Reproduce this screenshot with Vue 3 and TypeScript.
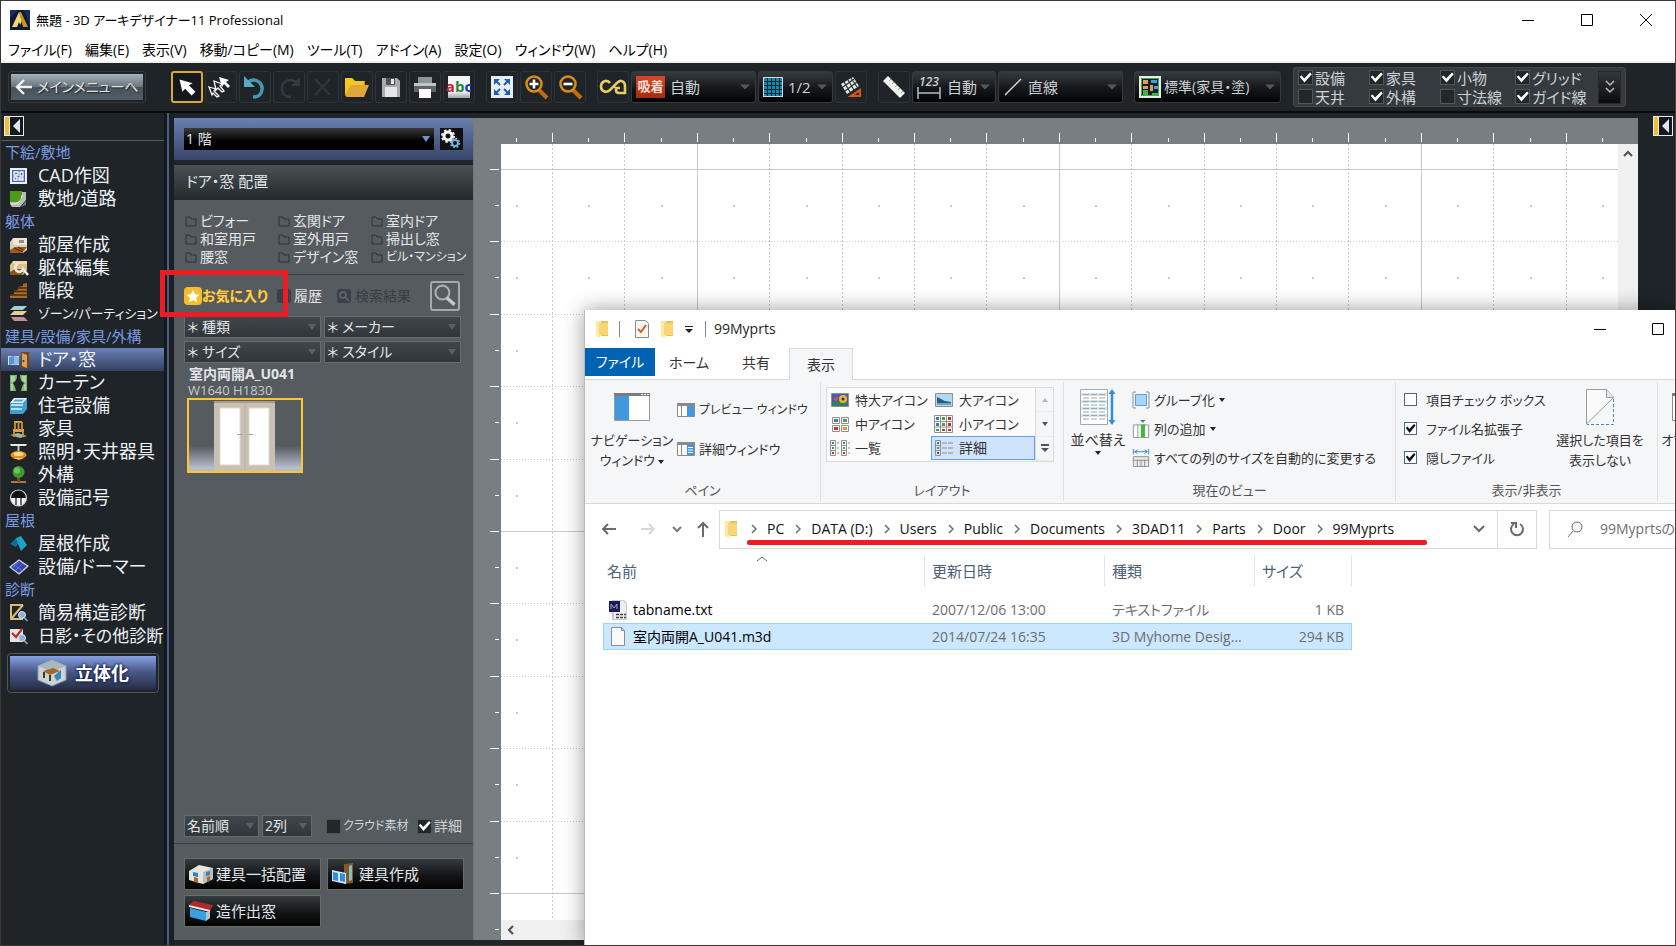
<script setup lang="ts">
import { ref } from 'vue'

interface SideEntry { label: string; icon?: string; active?: boolean; long?: boolean }
interface Tool { id: string; label: string; active?: boolean }
interface Layer { label: string; on: boolean }

const icons: Record<string, string> = {
  cad: '<rect x="1" y="1" width="17" height="16" fill="#e8eef8"/><rect x="3" y="3" width="13" height="12" fill="#4a66b0"/><path d="M5 5h4v3H5zM5 10h3v3H5zM11 5h3v4h-3zM10 11h4v2h-4z" fill="none" stroke="#fff" stroke-width="1.3"/>',
  site: '<path d="M1 2h16v8l-6 7H3l-2-3z" fill="#b9bdb8"/><path d="M1 1h12v7q-1 4-5 4H1z" fill="#4c9a18"/><path d="M2 14q10 1 11-9" stroke="#eee" fill="none"/><path d="M12 17l5-6v4z" fill="#777"/>',
  room: '<path d="M4 2h14v12l-4 3H1V6z" fill="#d9cdb4"/><path d="M4 2h14v7H4z" fill="#eee6d4"/><path d="M10 4h5v3h-5z" fill="#8b9296"/><path d="M1 14l5-3h12l-5 6H1z" fill="#9a5c1c"/><path d="M5 12l9 4M9 11l5 3" stroke="#4c2a08"/>',
  edit: '<path d="M4 2h14v9l-4 5H1V6z" fill="#dcc182"/><path d="M4 2h14v3H4z" fill="#eedcae"/><path d="M1 13l5-3h10l-3 6H1z" fill="#8a5218"/><path d="M9 5a4 4 0 1 0 5 5l5 6" fill="none" stroke="#e8eaec" stroke-width="2.6"/>',
  stairs: '<path d="M18 1v15H1v-3l4-1V9l4-1V5l5-1V2z" fill="#a96a2c"/><path d="M1 13h17M5 9.500h13M9 6h9" stroke="#4d2a0a" stroke-width="1.300"/>',
  zone: '<path d="M5 1h13l-4 4H1z" fill="#9fcfd0"/><path d="M5 6h13l-4 4H1z" fill="#e6cf93"/><path d="M2 12h13l4 4H5z" fill="#c58b9b"/>',
  door: '<path d="M-1 5h11v9H-1z" fill="#cfe4f6"/><path d="M0 6l5-1v8l-5 1z" fill="#5a94cf"/><path d="M5 5l5 1v7l-5 1z" fill="#8cbbe8"/><path d="M12 1h8v16h-8z" fill="#7a4616"/><path d="M13 2l5 2v13l-5-2z" fill="#d7a35c"/><circle cx="14.500" cy="10" r="1" fill="#4a2a0a"/>',
  curtain: '<path d="M1 1h7q0 6-4 8 2 3 3 8H1z" fill="#7fb878"/><path d="M18 1h-7q0 6 4 8-2 3-3 8h6z" fill="#7fb878"/><path d="M3 2v6M5 2v5M14 2v5M16 2v6M3 10v6M16 10v6" stroke="#d6efcf"/>',
  bath: '<path d="M5 1h13v11l-4 5H1V6z" fill="#3fa0cf"/><path d="M5 1h13l-4 5H1z" fill="#e9f3f8"/><path d="M6 2.500h9l-2 2H4z" fill="#4aa6d6"/><path d="M2 8h12M2 12h11" stroke="#dff3fb" stroke-width="1.500"/>',
  chair: '<path d="M1 15l8-2 9 3-7 2z" fill="#9dbb92"/><path d="M5 1h8v2H5zM4 9h11v3H4z" fill="#d6a050"/><path d="M6 2v8M9.500 2v8M13 2v8M5 11v6M14 11v6" stroke="#c98f3c" stroke-width="1.800"/>',
  lamp: '<path d="M1 1h17l-1 2H2z" fill="#e8e8e8"/><path d="M9.500 3v5" stroke="#c8c8c8" stroke-width="2"/><ellipse cx="9.500" cy="12" rx="8" ry="4" fill="#f08a1c"/><ellipse cx="9.500" cy="11" rx="5" ry="2" fill="#ffe28a"/><path d="M4 15h11l-5 2z" fill="#ffc25a"/>',
  tree: '<path d="M2 15h15v2H2z" fill="#a37a4a"/><path d="M8 10h3v6H8z" fill="#7a4a1c"/><circle cx="9.500" cy="6" r="6" fill="#3f9a34"/><circle cx="8" cy="4.500" r="3" fill="#72c45c"/>',
  symbol: '<circle cx="9.500" cy="9" r="8" fill="#f2f2f2" stroke="#c8ccce" stroke-width="1.200"/><path d="M2 9a7.500 7.500 0 0 1 15 0z" fill="#111"/><path d="M7 8v8M12 8v8" stroke="#111" stroke-width="1.200"/>',
  roof: '<path d="M1 9l6-6 5 1-5 8z" fill="#0c6f8c"/><path d="M7 3l5-2 6 9-6 6-3-7z" fill="#1fa0c4"/>',
  solar: '<path d="M1 9l9-7 9 6-9 8z" fill="#3a46a8" stroke="#cfd4e8" stroke-width="1.300"/><path d="M5 7l9 6M10 4L3 11M14 5l-8 8" stroke="#6c7be0" stroke-width=".8"/>',
  brace: '<path d="M1 1h13M2 1v14h12M14 1L2 15" fill="none" stroke="#dcb87c" stroke-width="2"/><circle cx="13" cy="11" r="3.500" fill="#8fb2dc" stroke="#d4e2f2"/><path d="M15.500 14l3 3" stroke="#9ea8b4" stroke-width="1.600"/>',
  shade: '<path d="M1 2h13v13H1z" fill="#e8e2e0"/><path d="M3 6l4 4 6-8" fill="none" stroke="#b03030" stroke-width="2.200"/><circle cx="13" cy="11" r="3.500" fill="#8fb2dc" stroke="#d4e2f2"/><path d="M15.500 14l3 3" stroke="#9ea8b4" stroke-width="1.600"/>',
  select: '<path d="M7 7l3 13 3-3 7 7 4-4-7-7 4-2z" fill="#fff"/>',
  multi: '<path d="M13 5l10 3-3 2 4 4-2 2-4-4-2 3z" fill="#fff"/><path d="M8 9l8 3-2 2 4 5-2 1-4-4-2 2zM3 15l7 2-2 2 5 5-2 1-4-4-1 2z" fill="#1c2023" stroke="#fff" stroke-width="1.300"/>',
  undo: '<path d="M8 10q6-4 11 0t2 11q-2 4-8 4" fill="none" stroke="#4a97b2" stroke-width="3.400"/><path d="M4 4v11h11z" fill="#5aa9c4"/>',
  redo: '<path d="M22 10q-6-4-11 0t-2 11q2 4 8 4" fill="none" stroke="#343a3d" stroke-width="2.600"/><path d="M26 5v9h-9z" fill="#343a3d"/>',
  remove: '<path d="M7 7l15 16M22 7L7 23" stroke="#31373b" stroke-width="2.200"/>',
  open: '<path d="M3 6h7l3 3h10v4L9 24H3z" fill="#c48a1a"/><path d="M3 7l6 17h-5z" fill="#e3a910"/><path d="M3 6h7l3 3h9v4L9 13 3 23z" fill="#f4c81c"/><path d="M9 13h18l-5 12H4z" fill="#e0a73c"/>',
  save: '<path d="M6 6h15l3 3v16H6z" fill="#a6abae"/><path d="M10 6h9v7h-9z" fill="#4c5256"/><path d="M15 7h3v5h-3z" fill="#e6e8ea"/><path d="M9 15h12v10H9z" fill="#e4e6e8"/>',
  print: '<path d="M8 5h14v6H8z" fill="#8e9498"/><path d="M4 11h22v9H4z" fill="#5d6468"/><path d="M4 11h22v3H4z" fill="#c0c4c7"/><path d="M9 17h12v9H9z" fill="#fff"/>',
  fit: '<path d="M4 4h22v22H4z" fill="#e8edf2"/><path d="M7 13V7h6zM17 7h6v6zM7 17v6h6zM23 17v6h-6z" fill="#1f5fae"/><path d="M9 9l4 4M21 9l-4 4M9 21l4-4M21 21l-4-4" stroke="#1f5fae" stroke-width="2"/>',
  plus: '<path d="M18 18l8 8" stroke="#c06a10" stroke-width="4"/><circle cx="13" cy="12" r="7.500" fill="#20262a" stroke="#d88a1e" stroke-width="2.600"/><path d="M8.500 12h9M13 7.500v9" stroke="#fff" stroke-width="2.600"/>',
  minus: '<path d="M18 18l8 8" stroke="#c06a10" stroke-width="4"/><circle cx="13" cy="12" r="7.500" fill="#20262a" stroke="#d88a1e" stroke-width="2.600"/><path d="M8.500 12h9" stroke="#fff" stroke-width="2.600"/>',
  link: '<path d="M12 11C9 7 3 9 3 14.500S9 21 12 18l7-7c3-4 8-2 8 3v7h-6q-3 0-3-3v-2h4" fill="none" stroke="#e6cc62" stroke-width="2.600"/>',
  tilt: '<path d="M5 12l12-7 6 9-12 8z" fill="#e6e8ea"/><path d="M8 10l6 10M12 8l6 10M15 6l6 9M7 15l11-8M9 19l12-9" stroke="#2a3034" stroke-width="1.200"/><path d="M15 24h9v-6z" fill="none" stroke="#d4581c" stroke-width="2.200"/>',
  ruler: '<path d="M4 9l5-5 17 17-5 5z" fill="#f1f1ee"/><path d="M12 7l-2 2M15 10l-2 2M18 13l-2 2M21 16l-2 2M24 19l-2 2" stroke="#9a9a98"/>',
}

const sideEntries: SideEntry[] = [
  { label: '下絵/敷地' },
  { label: 'CAD作図', icon: 'cad' },
  { label: '敷地/道路', icon: 'site' },
  { label: '躯体' },
  { label: '部屋作成', icon: 'room' },
  { label: '躯体編集', icon: 'edit' },
  { label: '階段', icon: 'stairs' },
  { label: 'ゾーン/パーティション', icon: 'zone', long: true },
  { label: '建具/設備/家具/外構' },
  { label: 'ドア・窓', icon: 'door', active: true },
  { label: 'カーテン', icon: 'curtain' },
  { label: '住宅設備', icon: 'bath' },
  { label: '家具', icon: 'chair' },
  { label: '照明・天井器具', icon: 'lamp' },
  { label: '外構', icon: 'tree' },
  { label: '設備記号', icon: 'symbol' },
  { label: '屋根' },
  { label: '屋根作成', icon: 'roof' },
  { label: '設備/ドーマー', icon: 'solar' },
  { label: '診断' },
  { label: '簡易構造診断', icon: 'brace' },
  { label: '日影・その他診断', icon: 'shade' },
]

const menus = ['ファイル(F)', '編集(E)', '表示(V)', '移動/コピー(M)', 'ツール(T)', 'アドイン(A)', '設定(O)', 'ウィンドウ(W)', 'ヘルプ(H)']

const editTools: Tool[] = [
  { id: 'select', label: '選択', active: true },
  { id: 'multi', label: '複数選択' },
  { id: 'undo', label: '元に戻す' },
  { id: 'redo', label: 'やり直し' },
  { id: 'remove', label: '削除' },
  { id: 'open', label: '開く' },
  { id: 'save', label: '保存' },
  { id: 'print', label: '印刷' },
]
const viewTools: Tool[] = [
  { id: 'fit', label: '全体表示' },
  { id: 'plus', label: '拡大' },
  { id: 'minus', label: '縮小' },
]

const layers = ref<Layer[]>([
  { label: '設備', on: true },
  { label: '家具', on: true },
  { label: '小物', on: true },
  { label: 'グリッド', on: true },
  { label: '天井', on: false },
  { label: '外構', on: true },
  { label: '寸法線', on: false },
  { label: 'ガイド線', on: true },
])

const categories = ['ビフォー', '玄関ドア', '室内ドア', '和室用戸', '室外用戸', '掃出し窓', '腰窓', 'デザイン窓', 'ビル・マンション']
const filters = ['種類', 'メーカー', 'サイズ', 'スタイル']
const cloud = ref(false)
const detail = ref(true)

const GRID = 72.4
const cols = Array.from({ length: 30 }, (_, i) => ({ pos: Math.round(51 + GRID * i), solid: i % 5 === 2 }))
const rows = Array.from({ length: 20 }, (_, i) => ({ pos: Math.round(25 + GRID * i), solid: i % 5 === 0 }))
const half = Math.round(GRID / 2)

const crumbs = ['PC', 'DATA (D:)', 'Users', 'Public', 'Documents', '3DAD11', 'Parts', 'Door', '99Myprts']
const ribbonChecks = ref([
  { label: '項目チェック ボックス', on: false },
  { label: 'ファイル名拡張子', on: true },
  { label: '隠しファイル', on: true },
])
const files = [
  { name: 'tabname.txt', date: '2007/12/06 13:00', type: 'テキストファイル', size: '1 KB', selected: false },
  { name: '室内両開A_U041.m3d', date: '2014/07/24 16:35', type: '3D Myhome Desig...', size: '294 KB', selected: true },
]
</script>

<template>
  <div class="app">
    <header class="titlebar">
      <svg class="logo" viewBox="0 0 20 20"><rect width="20" height="20" fill="#14305a" /><path d="M0 20V8l8-8h6l6 16v4z" fill="#0c1a34" /><path d="M2 17L9 2l3 9-3 6z" fill="#f3d57a" /><path d="M9 2h2l7 15h-5z" fill="#c79426" /><path d="M9 12l2 5H7z" fill="#0c1a34" /></svg>
      <h1>無題 - 3D アーキデザイナー11 Professional</h1>
      <div class="winbtns">
        <button aria-label="最小化"><svg viewBox="0 0 12 12"><path d="M0 6.500h12" stroke="#000" /></svg></button>
        <button aria-label="最大化"><svg viewBox="0 0 12 12"><path d="M.5.500h11v11H.5z" fill="none" stroke="#000" /></svg></button>
        <button aria-label="閉じる"><svg viewBox="0 0 12 12"><path d="M0 0l12 12M12 0L0 12" stroke="#000" /></svg></button>
      </div>
    </header>
    <nav class="menubar">
      <button v-for="m in menus" :key="m">{{ m }}</button>
    </nav>

    <div class="toolbar">
      <button class="mainmenu"><span><svg viewBox="0 0 18 18"><path d="M17 9H2M9 2L2 9l7 7" fill="none" stroke="#eef1f3" stroke-width="2.400" /></svg>メインメニューへ</span></button>
      <div class="tools">
        <button v-for="t in editTools" :key="t.id" class="tool" :class="{ on: t.active }" :aria-label="t.label">
          <svg viewBox="0 0 30 30" v-html="icons[t.id]" />
        </button>
        <button class="tool abc" aria-label="文字"><span class="abc-box"><b class="r">a</b><b class="g">b</b><b class="b">c</b></span></button>
      </div>
      <div class="tools">
        <button v-for="t in viewTools" :key="t.id" class="tool" :aria-label="t.label">
          <svg viewBox="0 0 30 30" v-html="icons[t.id]" />
        </button>
      </div>
      <div class="tools">
        <button class="tool" aria-label="連続"><svg viewBox="0 0 30 30" v-html="icons.link" /></button>
        <div class="combo wide">
          <span class="snap">吸着</span>
          <select aria-label="吸着"><option>自動</option></select>
          <svg class="caret" viewBox="0 0 12 6"><path d="M0 0h12L6 6z" /></svg>
        </div>
        <div class="combo narrow">
          <svg class="cicon" viewBox="0 0 20 20"><path d="M0 0h20v20H0z" fill="#d5dadc" /><path d="M1 1h18v18H1z" fill="#1488ae" /><path d="M4.500 1v18M8.500 1v18M12.500 1v18M16.500 1v18M1 4.500h18M1 8.500h18M1 12.500h18M1 16.500h18" stroke="#06242e" /></svg>
          <select aria-label="グリッド間隔"><option>1/2</option></select>
          <svg class="caret" viewBox="0 0 12 6"><path d="M0 0h12L6 6z" /></svg>
        </div>
        <button class="tool" aria-label="グリッド傾き"><svg viewBox="0 0 30 30" v-html="icons.tilt" /></button>
      </div>
      <div class="tools">
        <button class="tool" aria-label="計測"><svg viewBox="0 0 30 30" v-html="icons.ruler" /></button>
        <div class="combo dim">
          <span class="dims"><i>123</i><svg viewBox="0 0 24 12"><path d="M1 0v12M23 0v12M1 6h22" stroke="#b8bcc0" stroke-width="1.500" /></svg></span>
          <select aria-label="寸法"><option>自動</option></select>
          <svg class="caret" viewBox="0 0 12 6"><path d="M0 0h12L6 6z" /></svg>
        </div>
        <div class="combo wide">
          <svg class="cicon" viewBox="0 0 20 20"><path d="M2 18L18 2" stroke="#d5dadc" stroke-width="1.500" /></svg>
          <select aria-label="線種"><option>直線</option></select>
          <svg class="caret" viewBox="0 0 12 6"><path d="M0 0h12L6 6z" /></svg>
        </div>
      </div>
      <div class="tools">
        <div class="combo std">
          <svg class="cicon big" viewBox="0 0 22 22"><path d="M1 1h20v20H1z" fill="#123" stroke="#e6efe6" stroke-width="2" /><path d="M2.500 2.500h17v17h-17z" fill="none" stroke="#43b047" /><path d="M4 4h5v4H4zM4 10h5v3H4zM11 9h3v6h-3z" fill="#e79a52" /><path d="M12 4h6v3h-6zM15 10h4v3h-4z" fill="#4a9ee0" /><path d="M4 14h5v5H4zM13 17h6v2h-6z" fill="#43b047" /></svg>
          <select aria-label="表示設定"><option>標準(家具・塗)</option></select>
          <svg class="caret" viewBox="0 0 12 6"><path d="M0 0h12L6 6z" /></svg>
        </div>
      </div>
      <div class="layers">
        <div class="layer-grid">
          <label v-for="l in layers" :key="l.label" class="dcheck"><input v-model="l.on" type="checkbox">{{ l.label }}</label>
        </div>
        <button class="more" aria-label="その他"><svg viewBox="0 0 12 16"><path d="M2 2l4 4 4-4M2 9l4 4 4-4" fill="none" stroke="#b4babd" stroke-width="1.500" /></svg></button>
      </div>
    </div>

    <div class="body">
      <aside class="side">
        <div class="side-top"><button class="collapse" aria-label="折りたたむ"><svg viewBox="0 0 20 20"><path d="M0 0h20v20H0z" fill="#e6ebf5" /><path d="M1 1h4v18H1z" fill="#f0bf35" /><path d="M6 1h13v18H6z" fill="#15191c" /><path d="M16 3v14L9 10z" fill="#dfe4f6" /></svg></button></div>
        <ul>
          <li v-for="s in sideEntries" :key="s.label" :class="{ head: !s.icon, active: s.active, long: s.long }">
            <template v-if="!s.icon">{{ s.label }}</template>
            <button v-else><svg viewBox="0 0 19 18" v-html="icons[s.icon]" />{{ s.label }}</button>
          </li>
        </ul>
        <button class="solid"><span><svg viewBox="0 0 30 28"><path d="M15 1l14 6v14l-14 6L1 21V7z" fill="#c9d4d8" stroke="#8d9aa0" /><path d="M15 1l14 6-14 6L1 7z" fill="#aab8be" /><path d="M6 12l10-3 7 3-10 4z" fill="#a2672c" /><path d="M7 13v6M13 16v6" stroke="#5a3410" stroke-width="2" /><path d="M17 17l7-6v8l-4 3z" fill="#3a86b8" /></svg>立体化</span></button>
      </aside>
      <div class="divider"></div>

      <section class="panel">
        <div class="floor">
          <div class="floorsel">
            <select aria-label="階"><option>1 階</option></select>
            <svg viewBox="0 0 8 6"><path d="M0 0h8L4 6z" fill="#6f93cf" /></svg>
          </div>
          <button class="gear" aria-label="階設定"><svg viewBox="0 0 22 22"><circle cx="8" cy="8" r="4" fill="none" stroke="#f2f2f2" stroke-width="3" /><circle cx="8" cy="8" r="6" fill="none" stroke="#f2f2f2" stroke-width="2" stroke-dasharray="2.500 2.200" /><circle cx="15" cy="15" r="3" fill="none" stroke="#7aaedd" stroke-width="2" /><circle cx="15" cy="15" r="4.500" fill="none" stroke="#7aaedd" stroke-width="1.500" stroke-dasharray="1.800 1.700" /></svg></button>
        </div>
        <h2>ドア・窓 配置</h2>
        <div class="panel-main">
          <div class="cats">
            <button v-for="c in categories" :key="c" :class="{ small: c.length > 6 }"><svg viewBox="0 0 12 11"><path d="M1 10V1h4l1 2h5v7z" fill="none" stroke="#2c3236" /></svg>{{ c }}</button>
          </div>
          <div class="favrow">
            <button class="fav"><svg viewBox="0 0 18 18"><rect width="18" height="18" rx="4" fill="#f3bd2c" /><path d="M9 3l2 4.200 4.500.5-3.400 3 1 4.500L9 13l-4.100 2.200 1-4.500-3.400-3L7 7.200z" fill="#fff" /></svg>お気に入り</button>
            <button class="hist"><svg viewBox="0 0 14 14"><rect width="14" height="14" rx="3" fill="#394047" /><path d="M7 3v4h4" stroke="#596067" stroke-width="2" fill="none" /></svg>履歴</button>
            <button class="results" disabled><svg viewBox="0 0 14 14"><rect width="14" height="14" rx="3" fill="#394047" /><circle cx="6" cy="6" r="3" fill="none" stroke="#656c71" stroke-width="1.500" /><path d="M8 8l4 4" stroke="#656c71" stroke-width="1.500" /></svg>検索結果</button>
            <button class="search" aria-label="検索"><svg viewBox="0 0 30 30"><circle cx="12" cy="11" r="8" fill="none" stroke="#a9b0b5" stroke-width="2.400" /><path d="M17 17l9 8" stroke="#c3c8cb" stroke-width="4" /></svg></button>
            <div class="redbox"></div>
          </div>
          <div class="filters">
            <div v-for="f in filters" :key="f" class="psel">
              <select :aria-label="f"><option>＊ {{ f }}</option></select>
              <svg viewBox="0 0 8 6"><path d="M0 0h8L4 6z" fill="#596065" /></svg>
            </div>
          </div>
          <button class="part">
            <b>室内両開A_U041</b>
            <span>W1640 H1830</span>
            <svg viewBox="0 0 112 70" preserveAspectRatio="none">
              <defs><linearGradient id="floorfade" x1="0" y1="0" x2="0" y2="1"><stop offset=".65" stop-color="#555b5f" /><stop offset=".95" stop-color="#b4bbc9" /></linearGradient></defs>
              <rect width="112" height="70" fill="url(#floorfade)" />
              <path d="M25 1h61v69H25z" fill="#c9bfb2" /><path d="M25 1h61v2H25z" fill="#a59d92" /><path d="M56 3v67" stroke="#bbb1a4" />
              <path d="M31 8h20v56H31zM60 8h20v56H60z" fill="#fff" stroke="#dfd8cf" />
              <path d="M48 34h6M58 34h6" stroke="#a3a7a3" />
            </svg>
          </button>
          <div class="bottomrow">
            <div class="psel s1"><select aria-label="並び順"><option>名前順</option></select><svg viewBox="0 0 8 6"><path d="M0 0h8L4 6z" fill="#596065" /></svg></div>
            <div class="psel s2"><select aria-label="列数"><option>2列</option></select><svg viewBox="0 0 8 6"><path d="M0 0h8L4 6z" fill="#596065" /></svg></div>
            <label class="dcheck cloud"><input v-model="cloud" type="checkbox">クラウド素材</label>
            <label class="dcheck"><input v-model="detail" type="checkbox">詳細</label>
          </div>
        </div>
        <div class="actions">
          <button><svg viewBox="0 0 26 22"><path d="M1 8l10-6 14 3v11l-10 5L1 17z" fill="#e4e4e0" /><path d="M15 9l10-4v11l-10 5z" fill="#bdbdb8" /><path d="M5 9l5 1v4l-5-1zM18 9l4-1v4l-4 1z" fill="#2e83c4" /><path d="M6 14l4 1v5l-4-1zM19 14l3-1v5l-3 1z" fill="#a56a30" /></svg>建具一括配置</button>
          <button><svg viewBox="0 0 26 22"><path d="M13 1l9-1v20l-9 1z" fill="#8a5526" /><path d="M18 3l3-1v15l-3 1z" fill="#7cc4c4" /><path d="M1 7l14 3v11L1 18z" fill="#d7e8f4" /><path d="M2 9l5 1v8l-5-1zM9 10l5 1v8l-5-1z" fill="#2e8fe0" /></svg>建具作成</button>
          <button><svg viewBox="0 0 26 22"><path d="M1 5l5-4 19 4-3 6z" fill="#b0282c" /><path d="M1 5l21 5v2L1 7z" fill="#e8e8e8" /><path d="M2 8l16 4v9L2 17z" fill="#3aa0e0" /><path d="M18 12l4-1v7l-4 3z" fill="#b4c4cc" /></svg>造作出窓</button>
        </div>
      </section>

      <main class="canvas">
        <svg class="ruler-top">
          <g v-for="c in cols" :key="c.pos">
            <rect :x="c.pos + 27" y="15" width="1" height="9" fill="#fff" />
            <rect :x="c.pos + 27 - half" y="20" width="1" height="4" fill="#fff" />
          </g>
        </svg>
        <svg class="ruler-left">
          <g v-for="r in rows" :key="r.pos">
            <rect x="16" :y="r.pos" width="9" height="1" fill="#fff" />
            <rect x="21" :y="r.pos + half" width="4" height="1" fill="#fff" />
          </g>
        </svg>
        <svg class="sheet">
          <g fill="none" stroke="#c8c8c8" stroke-width="1">
            <line v-for="c in cols" :key="'c' + c.pos" :x1="c.pos + 0.5" y1="0" :x2="c.pos + 0.5" y2="2000" :stroke-dasharray="c.solid ? 'none' : '2 2'" />
            <line v-for="r in rows" :key="'r' + r.pos" x1="0" :y1="r.pos + 0.5" x2="3000" :y2="r.pos + 0.5" :stroke-dasharray="r.solid ? 'none' : '1 2'" />
          </g>
          <template v-for="r in rows" :key="'d' + r.pos">
            <rect v-for="c in cols" :key="c.pos" :x="c.pos - half" :y="r.pos + half" width="2" height="2" fill="#c8c8c8" />
          </template>
        </svg>
        <div class="vscroll"><button aria-label="上へ"><svg viewBox="0 0 10 8"><path d="M1 6l4-4 4 4" fill="none" stroke="#505050" stroke-width="2" /></svg></button></div>
        <div class="hscroll"><button aria-label="左へ"><svg viewBox="0 0 8 10"><path d="M6 1L2 5l4 4" fill="none" stroke="#505050" stroke-width="2" /></svg></button></div>
      </main>
      <div class="rightstrip"><button class="collapse" aria-label="展開"><svg viewBox="0 0 20 20"><path d="M0 0h20v20H0z" fill="#e6ebf5" /><path d="M1 1h4v18H1z" fill="#f0bf35" /><path d="M6 1h13v18H6z" fill="#15191c" /><path d="M16 3v14L9 10z" fill="#dfe4f6" /></svg></button></div>
    </div>

    <section class="explorer">
      <header class="ex-title">
        <svg class="folder" viewBox="0 0 14 18"><path d="M4 1h9v15H4z" fill="#e8bf58" /><path d="M1 1h5l1 14-3 3-3-2z" fill="#ffe9a2" /><path d="M4 3h9v12H4z" fill="#f6d679" /></svg>
        <i class="sep"></i>
        <svg class="doc" viewBox="0 0 14 18"><path d="M.5.500h10l3 3v14H.5z" fill="#f8f8f8" stroke="#8c8c8c" /><path d="M3 9l3 3 5-7" fill="none" stroke="#e8581c" stroke-width="2" /></svg>
        <svg class="folder" viewBox="0 0 14 18"><path d="M4 1h9v15H4z" fill="#e8bf58" /><path d="M1 1h5l1 14-3 3-3-2z" fill="#ffe9a2" /><path d="M4 3h9v12H4z" fill="#f6d679" /></svg>
        <button class="qat" aria-label="カスタマイズ"><svg viewBox="0 0 8 7"><path d="M0 0h8v1H0zM0 3h8L4 7z" fill="#222" /></svg></button>
        <i class="sep"></i>
        <h2>99Myprts</h2>
        <div class="ex-btns">
          <button aria-label="最小化"><svg viewBox="0 0 12 12"><path d="M0 6.500h12" stroke="#000" /></svg></button>
          <button aria-label="最大化"><svg viewBox="0 0 12 12"><path d="M.5.500h11v11H.5z" fill="none" stroke="#000" /></svg></button>
        </div>
      </header>
      <nav class="tabs">
        <button class="file">ファイル</button>
        <button class="t-home">ホーム</button>
        <button class="t-share">共有</button>
        <button class="current">表示</button>
      </nav>
      <div class="ribbon">
        <div class="group g-pane">
          <div class="gbody">
            <button class="bigbtn nav"><svg viewBox="0 0 36 28"><path d="M.5.500h35v27H.5z" fill="#fff" stroke="#9a9a9a" /><path d="M0 0h36v3H0z" fill="#7b7b7b" /><path d="M1 3h14v24H1z" fill="#3f98e0" /><path d="M27 1h2v1h-2zM30 1h2v1h-2zM33 1h2v1h-2z" fill="#fff" /></svg><span>ナビゲーション<br>ウィンドウ <svg class="dd" viewBox="0 0 6 4"><path d="M0 0h6L3 4z" /></svg></span></button>
            <div class="stack two">
              <button class="sm tight"><svg viewBox="0 0 18 14"><path d="M.5.500h17v13H.5z" fill="#fff" stroke="#8a8a8a" /><path d="M0 0h18v3H0z" fill="#8a8a8a" /><path d="M4.500 3v11" stroke="#8a8a8a" /><path d="M10 3h7v10h-7z" fill="#3f98e0" /></svg>プレビュー ウィンドウ</button>
              <button class="sm"><svg viewBox="0 0 18 14"><path d="M.5.500h17v13H.5z" fill="#fff" stroke="#8a8a8a" /><path d="M0 0h18v3H0z" fill="#8a8a8a" /><path d="M4.500 3v11" stroke="#8a8a8a" /><path d="M10 3h7v10h-7z" fill="#3f98e0" /><path d="M11 5.500h5M11 8h5M11 10.500h5" stroke="#fff" /></svg>詳細ウィンドウ</button>
            </div>
          </div>
          <p>ペイン</p>
        </div>
        <div class="group g-layout">
          <div class="gbody">
            <div class="gallery">
              <div class="views">
                <button><svg viewBox="0 0 20 18"><path d="M1.500 2.500h17v13h-17z" fill="#3c62b4" stroke="#909090" /><path d="M3 11h14v3H3z" fill="#2c8a3c" /><circle cx="6" cy="8" r="2" fill="#e8483c" /><circle cx="13" cy="8" r="4" fill="#f0b82a" /><circle cx="13" cy="8" r="1.500" fill="#402808" /></svg>特大アイコン</button>
                <button><svg viewBox="0 0 20 18"><path d="M1.500 2.500h17v13h-17z" fill="#b4d8f4" stroke="#909090" /><path d="M3 6l8 4 6 1v3H3z" fill="#28607c" /><path d="M3 12h14v2H3z" fill="#6ea4c0" /></svg>大アイコン</button>
                <button><svg viewBox="0 0 20 18"><path d="M2.500 2.500h7v6h-7zM11.500 2.500h7v6h-7zM2.500 10.500h7v6h-7zM11.500 10.500h7v6h-7z" fill="#fff" stroke="#909090" /><path d="M4 4h4v3H4z" fill="#3a7cb4" /><path d="M13 4h4v3h-4z" fill="#5a9a5c" /><path d="M4 12h4v3H4z" fill="#c8321c" /><path d="M13 12h4v3h-4z" fill="#d49a2a" /></svg>中アイコン</button>
                <button><svg viewBox="0 0 20 18"><path d="M.5.500h18v17H.5zM6.500 0v18M12.500 0v18M0 6.500h19M0 12h19" fill="#fff" stroke="#909090" /><path d="M2 2h3v3H2zM2 8h3v3H2z" fill="#3a7cb4" /><path d="M8 2h3v3H8zM8 8h3v3H8zM2 14h3v2H2z" fill="#4a9a4c" /><path d="M14 2h3v3h-3zM14 8h3v3h-3zM14 14h3v2h-3zM8 14h3v2H8z" fill="#c8321c" /></svg>小アイコン</button>
                <button><svg viewBox="0 0 20 18"><path d="M.5 1.500h5v15h-5zM11.500 1.500h5v15h-5zM0 6.500h6M0 11.500h6M11 6.500h6M11 11.500h6M7 4h2M7 9h2M7 14h2M18 4h2M18 9h2M18 14h2" fill="none" stroke="#909090" /><path d="M2 3h2v2H2zM13 3h2v2h-2z" fill="#3a7cb4" /><path d="M2 8h2v2H2zM13 8h2v2h-2z" fill="#4a9a4c" /><path d="M2 13h2v2H2zM13 13h2v2h-2z" fill="#c8321c" /></svg>一覧</button>
                <button class="picked"><svg viewBox="0 0 20 18"><path d="M1.500 1.500h5v15h-5zM1 6.500h6M1 11.500h6M8 4h5M8 9h5M8 14h5M14 4h5M14 9h5M14 14h5" fill="none" stroke="#909090" /><path d="M3 3h2v2H3z" fill="#3a7cb4" /><path d="M3 8h2v2H3z" fill="#4a9a4c" /><path d="M3 13h2v2H3z" fill="#c8321c" /></svg>詳細</button>
              </div>
              <div class="gscroll">
                <button aria-label="上"><svg viewBox="0 0 6 4"><path d="M0 4h6L3 0z" fill="#b4b8bc" /></svg></button>
                <button aria-label="下"><svg viewBox="0 0 6 4"><path d="M0 0h6L3 4z" fill="#44546a" /></svg></button>
                <button aria-label="すべて"><svg class="tall" viewBox="0 0 8 8"><path d="M0 0h8v2H0zM0 4h8L4 8z" fill="#44546a" /></svg></button>
              </div>
            </div>
          </div>
          <p>レイアウト</p>
        </div>
        <div class="group g-view">
          <div class="gbody">
            <button class="bigbtn sort"><svg viewBox="0 0 36 36"><path d="M.5.500h27v35H.5z" fill="#fff" stroke="#a8a8a8" /><path d="M1 4h26v3H1zM1 11h26v3H1zM1 18h26v3H1zM1 25h26v3H1z" fill="#cfe6f4" /><path d="M3 5.500h22M3 9h22M3 12.500h22M3 16h22M3 19.500h22M3 23h22M3 26.500h22M3 30h22" stroke="#a4a4a4" stroke-dasharray="6 2" /><path d="M32 3v30" stroke="#2f8ddb" stroke-width="2.500" /><path d="M28.500 5L32 0l3.500 5zM28.500 31l3.500 5 3.500-5z" fill="#2f8ddb" /></svg><span>並べ替え</span><svg class="dd" viewBox="0 0 6 4"><path d="M0 0h6L3 4z" /></svg></button>
            <div class="stack three">
              <button class="sm"><svg viewBox="0 0 18 18"><path d="M4 1H1v16h3M14 1h3v16h-3" fill="none" stroke="#909090" /><path d="M3.500 3.500h11v11h-11z" fill="#a8d6fa" stroke="#5f9fd6" /></svg>グループ化 <svg class="dd" viewBox="0 0 6 4"><path d="M0 0h6L3 4z" /></svg></button>
              <button class="sm"><svg viewBox="0 0 18 20"><path d="M.5 5.500h17v14H.5zM5.500 5v15M13 5v15" fill="#fff" stroke="#8a8a8a" /><path d="M9 5h4v14H9z" fill="#2fc42f" /><path d="M8 0h6l-3 3z" fill="#2f7fc4" /></svg>列の追加 <svg class="dd" viewBox="0 0 6 4"><path d="M0 0h6L3 4z" /></svg></button>
              <button class="sm"><svg viewBox="0 0 18 20"><path d="M.5 0v6M17.500 0v6M2 3h14M5 1L2 3l3 2M13 1l3 2-3 2" fill="none" stroke="#2f7fc4" /><path d="M.5 8.500h17v11H.5zM0 12.500h18M5 12v8M9 12v8M13 12v8" fill="#e8e8e8" stroke="#8a8a8a" /></svg>すべての列のサイズを自動的に変更する</button>
            </div>
          </div>
          <p>現在のビュー</p>
        </div>
        <div class="group g-show">
          <div class="gbody">
            <div class="stack three checks">
              <label v-for="c in ribbonChecks" :key="c.label" class="lcheck"><input v-model="c.on" type="checkbox">{{ c.label }}</label>
            </div>
            <button class="bigbtn hide"><svg viewBox="0 0 28 36"><path d="M.5 35V.5h20l7 8z" fill="#fafafa" stroke="#9a9a9a" /><path d="M20.500.500v8h7" fill="#e8e8e8" stroke="#9a9a9a" /><path d="M27.500 10v25.500H1" fill="none" stroke="#2f8ddb" stroke-dasharray="3 2" /></svg><span>選択した項目を<br>表示しない</span></button>
          </div>
          <p>表示/非表示</p>
        </div>
        <div class="group g-opt">
          <div class="gbody">
            <button class="bigbtn opt"><svg viewBox="0 0 36 28"><path d="M.5.500h35v27H.5z" fill="#fff" stroke="#8a8a8a" /><path d="M0 0h36v3H0z" fill="#7b7b7b" /></svg><span>オプション</span></button>
          </div>
        </div>
      </div>
      <div class="addrrow">
        <button class="nb" aria-label="戻る"><svg viewBox="0 0 16 16"><path d="M15 8H2M7 3L2 8l5 5" fill="none" stroke="#6a6a6a" stroke-width="2" /></svg></button>
        <button class="nb fwd" aria-label="進む"><svg viewBox="0 0 16 16"><path d="M1 8h13M9 3l5 5-5 5" fill="none" stroke="#d8d8d8" stroke-width="2" /></svg></button>
        <button class="nb hist2" aria-label="履歴"><svg viewBox="0 0 16 16"><path d="M4 6l4 4 4-4" fill="none" stroke="#7a7a7a" stroke-width="2" /></svg></button>
        <button class="nb up" aria-label="上へ"><svg viewBox="0 0 16 16"><path d="M8 16V2M3 7l5-5 5 5" fill="none" stroke="#6a6a6a" stroke-width="2" /></svg></button>
        <div class="address">
          <div class="path">
            <svg class="folder" viewBox="0 0 14 18"><path d="M4 1h9v15H4z" fill="#e8bf58" /><path d="M1 1h5l1 14-3 3-3-2z" fill="#ffe9a2" /><path d="M4 3h9v12H4z" fill="#f6d679" /></svg>
            <div class="crumbs">
              <template v-for="c in crumbs" :key="c">
                <svg class="chev" viewBox="0 0 6 10"><path d="M1 1l4 4-4 4" fill="none" stroke="#6e6e6e" stroke-width="1.500" /></svg>
                <button>{{ c }}</button>
              </template>
              <span class="underline"></span>
            </div>
            <button class="drop" aria-label="履歴一覧"><svg viewBox="0 0 12 8"><path d="M1 1l5 5 5-5" fill="none" stroke="#6a6a6a" stroke-width="2" /></svg></button>
          </div>
          <button class="refresh" aria-label="更新"><svg viewBox="0 0 16 16"><path d="M11 3a6 6 0 1 1-6 0" fill="none" stroke="#6a6a6a" stroke-width="2" /><path d="M2 2h5v5" fill="none" stroke="#6a6a6a" stroke-width="2" /></svg></button>
        </div>
        <label class="searchbox"><svg viewBox="0 0 16 16"><circle cx="10" cy="6" r="5" fill="none" stroke="#6a6a6a" /><path d="M6 10l-5 6" stroke="#6a6a6a" /></svg><input type="text" aria-label="検索" placeholder="99Myprtsの検索"></label>
      </div>
      <table>
        <thead>
          <tr>
            <th class="c-name"><svg class="sortup" viewBox="0 0 10 6"><path d="M0 5l5-4 5 4" fill="none" stroke="#6a6a6a" /></svg>名前</th>
            <th class="c-date">更新日時</th>
            <th class="c-type">種類</th>
            <th class="c-size">サイズ</th>
          </tr>
        </thead>
        <tbody>
          <tr v-for="f in files" :key="f.name" :class="{ sel: f.selected }">
            <td class="name">
              <svg v-if="f.selected" viewBox="0 0 18 20"><path d="M2.500.500h10l3 3v15h-13z" fill="#fafafa" stroke="#8c8c8c" /><path d="M12.500.500v3h3" fill="none" stroke="#8c8c8c" /></svg>
              <svg v-else viewBox="0 0 18 20"><path d="M3 0h12l3 3v17H3z" fill="#c8ccd0" /><path d="M5 1h9l3 3v15H5z" fill="#eceef0" /><path d="M0 1h11v11H0z" fill="#1a1a5e" /><path d="M2 9V4l3 4 3-4v5" fill="none" stroke="#aab" /><path d="M7 14.500h10M7 17.500h10" stroke="#444" stroke-width="1.500" stroke-dasharray="3 1" /></svg>
              {{ f.name }}
            </td>
            <td>{{ f.date }}</td>
            <td>{{ f.type }}</td>
            <td class="size">{{ f.size }}</td>
          </tr>
        </tbody>
      </table>
    </section>
  </div>
</template>

<style>
html, body { margin: 0; background: #1e2428; }
</style>

<style scoped>
* { box-sizing: border-box; }
button, select, input { font: inherit; color: inherit; margin: 0; padding: 0; border: 0; background: none; border-radius: 0; }
select { appearance: none; outline: 0; text-overflow: clip; }
option { color: #000; }
h1, h2, p, ul { margin: 0; padding: 0; font-weight: 400; list-style: none; }
svg { display: block; flex: none; }
.app {
  position: relative; height: 100vh; overflow: hidden; display: flex; flex-direction: column;
  background: #1e2428; border: 1px solid #3c3735; border-right-color: #4a3f3d;
  font-family: "Open Sans", "Noto Sans CJK JP", sans-serif; font-size: 14px; line-height: 20px;
  font-feature-settings: "palt"; white-space: nowrap;
}
.titlebar { display: flex; align-items: center; height: 38px; padding-left: 9px; background: #fff; color: #000; }
.titlebar h1 { flex: 1; font-size: 13px; margin-left: 6px; }
.logo { width: 20px; height: 20px; }
.winbtns { display: flex; }
.winbtns button { width: 59px; height: 36px; display: grid; place-items: center; }
.winbtns svg, .ex-btns svg { width: 12px; height: 12px; }
.menubar { display: flex; gap: 13px; height: 24px; padding-left: 7px; background: #fff; border-bottom: 2px solid #f0f0f0; color: #000; }

.toolbar { display: flex; align-items: center; height: 50px; padding-left: 7px; border-bottom: 2px solid #080a0b; color: #ccd2d6; }
.mainmenu { width: 138px; height: 32px; padding: 2px; border: 1px solid #343a3e; border-radius: 3px; margin-right: 25px; }
.mainmenu span { display: flex; align-items: center; gap: 4px; height: 26px; padding-left: 4px; background: linear-gradient(#a5b0b9, #69747d 50%, #47525b 52%, #525e67); font-size: 14px; color: #dfe4e8; text-shadow: 1px 1px 1px #222; }
.mainmenu svg { width: 18px; height: 18px; }
.tools { display: flex; gap: 2px; margin-right: 11px; }
.tool { width: 32px; height: 32px; border: 1px solid #2d3337; border-radius: 3px; }
.tool.on { border: 2px solid #dca935; background: #15191d; }
.tool svg { width: 30px; height: 30px; }
.tool.on svg { width: 28px; height: 28px; }
.abc { display: grid; place-items: center; }
.abc-box { display: flex; justify-content: center; width: 22px; height: 22px; background: linear-gradient(#f4f4f4 70%, #9da3a6); font-size: 15px; line-height: 20px; }
.r { color: #c8202c; } .g { color: #1c8a3c; } .b { color: #2030c0; }
.combo { display: flex; align-items: center; height: 32px; border: 1px solid #33393d; border-radius: 3px; background: linear-gradient(#373b3f, #14171a 55%, #030404); font-size: 15px; padding: 0 5px 0 4px; }
.combo select { flex: 1; min-width: 0; margin-left: 5px; }
.combo.wide { width: 125px; }
.combo.narrow { width: 75px; }
.combo.dim { width: 84px; }
.combo.dim select { margin-left: 6px; }
.combo.std { width: 147px; margin-right: 1px; }
.combo.std select { margin-left: 3px; font-size: 14px; }
.caret { width: 10px; height: 6px; fill: #52585c; }
.cicon { width: 20px; height: 20px; }
.cicon.big { width: 22px; height: 22px; }
.snap { width: 29px; height: 22px; background: linear-gradient(#d4482a, #a82a0c); color: #f6dcd0; font-size: 13px; line-height: 21px; text-align: center; font-weight: 700; }
.dims { width: 24px; font-size: 12px; line-height: 11px; text-align: center; font-weight: 600; }
.dims svg { width: 24px; height: 12px; }
.layers { display: flex; align-items: center; height: 40px; width: 333px; padding: 0 4px; border: 1px solid #42484c; border-radius: 3px; background: #343a3e; font-size: 15px; }
.layer-grid { flex: 1; display: grid; grid-template-columns: 71px 71px 75px 1fr; row-gap: 2px; }
.dcheck { display: flex; align-items: center; gap: 2px; height: 17px; color: #ccd2d6; }
.dcheck input { appearance: none; width: 15px; height: 15px; border: 1px solid #50575b; background: #22272a; flex: none; }
.dcheck input:checked::after { content: ""; display: block; width: 13px; height: 13px; background: #fff; clip-path: polygon(5% 45%, 20% 35%, 40% 58%, 85% 12%, 98% 25%, 42% 88%); }
.more { width: 23px; height: 33px; display: grid; place-items: center; background: linear-gradient(#33383c, #0a0b0c); border: 1px solid #24292c; }
.more svg { width: 12px; height: 16px; }

.body { flex: 1; min-height: 0; display: flex; }
.side { width: 163px; flex: none; color: #eef2f6; }
.side-top { height: 28px; padding: 3px 0 0 3px; border-bottom: 1px solid #555b60; }
.collapse, .collapse svg { width: 20px; height: 20px; display: block; }
.side li { height: 23px; line-height: 23px; font-size: 18px; }
.side li.head { padding-left: 4px; font-size: 15px; color: #7d9ae0; }
.side li.long { font-size: 13px; }
.side li:last-child { font-size: 17px; }
.side li.active { background: linear-gradient(#6a80b6, #33415f); }
.side li button { display: flex; align-items: center; gap: 10px; width: 100%; height: 23px; padding-left: 8px; text-align: left; }
.side li svg { width: 19px; height: 18px; overflow: visible; }
.solid { display: block; width: 152px; height: 40px; margin: 6px 0 0 6px; padding: 2px; border: 1px solid #50565a; border-radius: 4px; }
.solid span { display: flex; align-items: center; justify-content: center; gap: 8px; height: 34px; background: linear-gradient(#86a2e4, #4a5a8a 45%, #252c44); font-size: 18px; font-weight: 700; color: #fff; text-shadow: 0 0 3px #101840, 0 0 3px #101840; }
.solid svg { width: 30px; height: 28px; }
.divider { width: 10px; flex: none; background: linear-gradient(90deg, #15191c 3px, #4a5d84 3px, #4a5d84 5px, #1a1f23 5px); }

.panel { width: 300px; flex: none; margin: 5px 0; display: flex; flex-direction: column; background: #555b5f; border-right: 1px solid #6f767a; color: #e2e6e8; font-size: 14px; position: relative; z-index: 1; }
.floor { display: flex; gap: 6px; height: 42px; padding: 10px 10px 0 10px; background: linear-gradient(#6a80ae, #37456a); }
.floorsel { flex: 1; display: flex; align-items: center; height: 22px; padding: 0 4px 0 2px; background: linear-gradient(#3a3a3a, #000 60%); }
.floorsel select { flex: 1; }
.floorsel svg { width: 8px; height: 6px; }
.gear { width: 23px; height: 22px; background: #111; }
.gear svg { width: 22px; height: 22px; }
.panel h2 { height: 40px; border-top: 5px solid #1e2428; background: linear-gradient(#4a5053, #24292c); padding-left: 12px; font-size: 15px; line-height: 32px; color: #dfe3e6; }
.panel-main { flex: 1; display: flex; flex-direction: column; padding: 12px 9px 6px 10px; }
.cats { display: grid; grid-template-columns: 93px 93px 1fr; grid-auto-rows: 18px; padding-bottom: 8px; border-bottom: 1px solid #373d41; }
.cats button { display: flex; align-items: center; gap: 3px; padding-left: 1px; }
.cats .small { font-size: 12px; }
.cats svg { width: 12px; height: 11px; }
.favrow { position: relative; display: flex; align-items: center; height: 41px; }
.favrow button { display: flex; align-items: center; }
.fav { width: 93px; color: #ffd04a; text-shadow: 0 0 1px #a87808; font-weight: 700; }
.fav svg { width: 18px; height: 18px; }
.hist { width: 60px; gap: 3px; }
.hist svg, .results svg { width: 14px; height: 14px; }
.results { gap: 4px; flex: 1; color: #383e42; }
.search { width: 30px; height: 30px; border: 2px solid #a4abaf; border-radius: 3px; margin-right: 4px; }
.search svg { width: 26px; height: 26px; }
.redbox { position: absolute; left: -24px; top: -5px; width: 128px; height: 47px; border: 5px solid #ed1c24; pointer-events: none; z-index: 3; }
.filters { display: grid; grid-template-columns: 137px 137px; gap: 3px; }
.psel { display: flex; align-items: center; height: 22px; border: 1px solid #656b6f; background: linear-gradient(#40474b, #30363a); padding-right: 4px; }
.psel select { flex: 1; min-width: 0; padding-left: 2px; }
.psel svg { width: 8px; height: 6px; }
.part { display: flex; flex-direction: column; align-items: flex-start; width: 116px; margin: 2px 0 0 3px; text-align: left; }
.part b { line-height: 18px; margin-left: 2px; font-size: 14px; }
.part span { line-height: 15px; margin-left: 1px; font-size: 13px; color: #c6cbce; }
.part svg { width: 116px; height: 75px; border: 2px solid #ffc433; }
.bottomrow { display: flex; align-items: center; margin-top: auto; }
.s1 { width: 75px; margin-right: 3px; }
.s2 { width: 50px; margin-right: 14px; }
.cloud { width: 91px; font-size: 12px; }
.actions { display: grid; grid-template-columns: 137px 137px; gap: 5px 6px; height: 97px; align-content: start; padding: 14px 0 0 10px; border-top: 1px solid #373d41; }
.actions button { display: flex; align-items: center; gap: 2px; height: 32px; padding-left: 3px; border: 1px solid #696b66; background: linear-gradient(#353b3f, #101214 60%, #030303); font-size: 15px; }
.actions svg { width: 26px; height: 22px; }

.canvas { flex: 1; min-width: 0; margin: 5px 0; display: grid; grid-template-columns: 27px minmax(0, 1fr) 20px; grid-template-rows: 26px minmax(0, 1fr) 20px; background: #787e82; }
.canvas > svg { width: 100%; height: 100%; overflow: hidden; }
.ruler-top { grid-column: 1 / 4; }
.ruler-left { grid-row: 2 / 4; }
.sheet { background: #fff; }
.vscroll, .hscroll { background: #f0f0f0; }
.vscroll { grid-row: 2 / 4; grid-column: 3; }
.hscroll { grid-row: 3; grid-column: 2; }
.vscroll button { display: grid; place-items: center; width: 20px; height: 20px; }
.vscroll svg { width: 10px; height: 8px; }
.hscroll button { display: grid; place-items: center; width: 20px; height: 20px; }
.hscroll svg { width: 8px; height: 10px; }
.rightstrip { width: 37px; flex: none; padding: 3px 0 0 15px; }

.explorer { position: absolute; left: 583px; top: 309px; right: -1px; bottom: -1px; z-index: 5; background: #fff; border-left: 1px solid #b8b8b8; box-shadow: 0 0 20px rgba(0, 0, 0, .4); color: #1e1e1e; clip-path: inset(-30px 0 0 -30px); }
.folder { width: 14px; height: 18px; }
.ex-title { display: flex; align-items: center; height: 38px; padding-left: 10px; }
.ex-title h2 { margin-left: 8px; font-size: 14px; flex: 1; }
.sep { width: 1px; height: 16px; background: #8a8a8a; }
.ex-title .sep:nth-of-type(1) { margin: 0 15px 0 10px; }
.doc { width: 14px; height: 18px; margin-right: 11px; }
.qat { margin: 0 12px 0 11px; }
.qat svg { width: 8px; height: 7px; }
.ex-btns { display: flex; gap: 11px; }
.ex-btns button { width: 57px; height: 36px; display: grid; place-items: center; }
.ex-btns button:last-child { width: 37px; }
.tabs { display: flex; height: 32px; border-bottom: 1px solid #dadbdc; font-size: 14px; color: #333; }
.tabs button { height: 30px; }
.tabs .file { width: 70px; height: 28px; background: #0063b1; color: #fff; }
.t-home { width: 68px; }
.t-share { width: 66px; }
.tabs .current { width: 64px; height: 32px; border: 1px solid #dadbdc; border-bottom: 0; background: #f5f6f7; }
.ribbon { display: flex; height: 124px; background: #f5f6f7; border-bottom: 1px solid #d8d9da; overflow: hidden; color: #333; font-size: 13px; }
.group { flex: none; display: flex; flex-direction: column; position: relative; border-right: 1px solid #e0e1e2; margin: 2px 0; }
.group p { text-align: center; height: 21px; color: #555; }
.gbody { flex: 1; display: flex; }
.g-pane { width: 236px; } .g-layout { width: 243px; } .g-view { width: 332px; } .g-show { width: 262px; } .g-opt { width: 90px; border: 0; }
.bigbtn { display: flex; flex-direction: column; align-items: center; line-height: 20px; }
.nav { width: 80px; padding-top: 11px; gap: 9px; margin-left: 7px; }
.nav > svg, .opt > svg { width: 36px; height: 28px; }
.dd { width: 6px; height: 4px; display: inline-block; vertical-align: middle; fill: #222; }
.stack { display: flex; flex-direction: column; }
.two { padding: 8px 0 0 5px; }
.two .sm { height: 39px; }
.three { padding-top: 3px; }
.three > * { height: 29px; }
.sm { display: flex; align-items: center; gap: 4px; }
.tight { font-size: 12px; }
.two .sm > svg { width: 18px; height: 14px; }
.three .sm > svg:first-child { width: 18px; height: 18px; }
.gallery { display: flex; width: 228px; height: 75px; margin: 5px 0 0 5px; border: 1px solid #dadbdc; background: #fbfbfc; }
.views { flex: 1; display: grid; grid-template-columns: 104px 104px; grid-auto-rows: 24px; }
.views button { display: flex; align-items: center; gap: 5px; padding-left: 3px; }
.views svg { width: 20px; height: 18px; }
.views .picked { background: #cfe3fa; border: 1px solid #62a2e4; padding-left: 2px; font-size: 14px; }
.gscroll { width: 18px; border-left: 1px solid #dadbdc; background: #f5f6f7; display: grid; grid-template-rows: repeat(3, 1fr); }
.gscroll button { display: grid; place-items: center; border-bottom: 1px solid #ebeced; }
.gscroll svg { width: 6px; height: 4px; }
.gscroll .tall { width: 8px; height: 8px; }
.sort { width: 68px; padding-top: 7px; gap: 5px; font-size: 14px; }
.sort > svg:first-child { width: 36px; height: 36px; }
.sort .dd { margin-top: -4px; }
.checks { padding-left: 8px; flex: 1; }
.lcheck { display: flex; align-items: center; gap: 9px; }
.lcheck input { appearance: none; width: 13px; height: 13px; border: 1px solid #4a6590; background: #fff; }
.lcheck input:checked::after { content: ""; display: block; width: 11px; height: 11px; background: #111; clip-path: polygon(8% 45%, 22% 32%, 40% 55%, 82% 8%, 96% 22%, 42% 92%); }
.hide { width: 96px; margin-right: 9px; padding-top: 7px; gap: 5px; }
.hide > svg { width: 28px; height: 36px; }
.opt { width: 64px; padding-top: 11px; gap: 9px; }
.addrrow { display: flex; align-items: center; height: 50px; padding-left: 16px; }
.nb { width: 16px; height: 16px; }
.nb svg { width: 16px; height: 16px; }
.fwd { margin-left: 23px; }
.hist2 { margin-left: 13px; }
.up { margin: 0 8px 0 10px; }
.address { flex: 1; display: flex; height: 39px; border: 1px solid #d9d9d9; margin-right: 12px; color: #111; }
.path { flex: 1; display: flex; align-items: center; padding-left: 4px; min-width: 0; }
.crumbs { position: relative; display: flex; align-items: center; gap: 10px; height: 37px; margin-left: 13px; }
.crumbs button { padding-right: 1px; }
.chev { width: 6px; height: 10px; }
.underline { position: absolute; left: -4px; right: -32px; bottom: 3px; height: 5px; border-radius: 2px; background: #ed1c24; }
.drop { margin-left: auto; padding: 0 12px; }
.drop svg { width: 12px; height: 8px; }
.refresh { width: 39px; display: grid; place-items: center; border-left: 1px solid #d9d9d9; }
.refresh svg { width: 16px; height: 16px; }
.searchbox { width: 127px; height: 39px; flex: none; display: flex; align-items: center; gap: 17px; padding-left: 17px; border: 1px solid #d9d9d9; border-right: 0; overflow: hidden; }
.searchbox svg { width: 16px; height: 16px; }
.searchbox input { width: 120px; flex: none; outline: 0; }
.searchbox input::placeholder { color: #707070; opacity: 1; }
table { border-collapse: collapse; margin: 1px 0 0 18px; table-layout: fixed; width: 749px; }
th { position: relative; height: 41px; padding: 0 0 0 7px; text-align: left; vertical-align: top; font-weight: 400; font-size: 15px; line-height: 32px; color: #4c607a; background: linear-gradient(#e5e5e5, #e5e5e5) right top / 1px 32px no-repeat; }
.c-name { width: 322px; padding-left: 4px; }
.c-date { width: 180px; }
.c-type { width: 150px; }
.sortup { position: absolute; left: 50%; top: 1px; width: 10px; height: 6px; margin-left: -7px; }
td { height: 27px; padding: 0 0 0 7px; color: #6d6d6d; }
td.name { display: flex; align-items: center; gap: 6px; padding-left: 6px; color: #000; }
td.name svg { width: 18px; height: 20px; }
td.size { text-align: right; padding-right: 8px; }
tr.sel { background: #cce8ff; outline: 1px solid #99d1ff; outline-offset: -1px; }
</style>
